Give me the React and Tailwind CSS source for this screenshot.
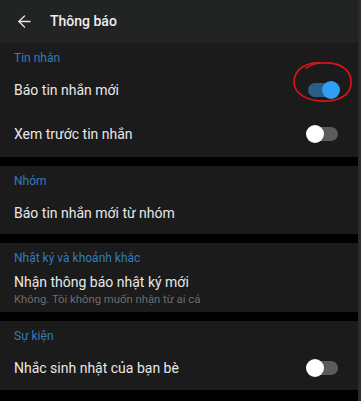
import { ArrowLeft } from "lucide-react";

function Toggle({ on }) {
  return (
    <div className="relative w-[30px] h-[16px] flex items-center">
      <div
        className={`w-[30px] h-[14px] rounded-full ${
          on ? "bg-[#2c5d86]" : "bg-[#5b5b5b]"
        }`}
      />
      <div
        className={`absolute top-[-1px] w-[18px] h-[18px] rounded-full ${
          on ? "right-[-2px] bg-[#2e9ff2]" : "left-[-2px] bg-white"
        }`}
      />
    </div>
  );
}

function Row({ title, toggle, circled }) {
  return (
    <div className="flex items-center justify-between pl-[14px] pr-[20px] h-[44px]">
      <span className="text-[14px] text-[#e8e8e8] leading-[20px]">{title}</span>
      {toggle !== undefined && (
        <div className="relative">
          <Toggle on={toggle} />
          {circled && (
            <svg
              className="absolute left-[-16px] top-[-22px]"
              width="62"
              height="44"
              viewBox="0 0 62 44"
              fill="none"
            >
              <path
                d="M31 3 C14 1 2 10 2 22 C2 34 16 42 35 41 C52 40 60 32 59 20 C58 9 47 2 31 3 C24 3 18 5 14 8"
                stroke="#e0131a"
                strokeWidth="1.6"
                strokeLinecap="round"
              />
            </svg>
          )}
        </div>
      )}
    </div>
  );
}

function Section({ label, children, className = "" }) {
  return (
    <div className={`bg-[#1b1b1b] ${className}`}>
      <div className="pl-[14px] pt-[6px] text-[12px] text-[#2f7dbd] leading-[18px]">
        {label}
      </div>
      {children}
    </div>
  );
}

export default function App() {
  return (
    <div
      className="w-[361px] h-[401px] bg-black flex overflow-hidden"
      style={{ fontFamily: "Roboto, 'Noto Sans', sans-serif" }}
    >
      <div className="flex-1 flex flex-col gap-[9px]">
        <div>
          <div className="h-[43px] bg-[#222423] flex items-center">
            <ArrowLeft className="ml-[15px] text-[#e8e8e8]" size={19} strokeWidth={1.6} />
            <span className="ml-[16px] text-[14px] font-medium text-[#eeeeee]">
              Thông báo
            </span>
          </div>
          <Section label="Tin nhắn" className="h-[114px]">
            <div className="pt-[1px]">
              <Row title="Báo tin nhắn mới" toggle={true} circled />
              <Row title="Xem trước tin nhắn" toggle={false} />
            </div>
          </Section>
        </div>
        <Section label="Nhóm" className="h-[68px]">
          <div className="pt-[1px]">
            <Row title="Báo tin nhắn mới từ nhóm" />
          </div>
        </Section>
        <Section label="Nhật ký và khoảnh khắc" className="h-[69px]">
          <div className="pl-[14px] pt-[5px] flex flex-col">
            <span className="text-[14px] text-[#e8e8e8] leading-[20px]">
              Nhận thông báo nhật ký mới
            </span>
            <span className="text-[11.3px] text-[#6d6d6d] leading-[16px]">
              Không. Tôi không muốn nhận từ ai cả
            </span>
          </div>
        </Section>
        <Section label="Sự kiện" className="h-[69px]">
          <div className="pt-[1px]">
            <Row title="Nhắc sinh nhật của bạn bè" toggle={false} />
          </div>
        </Section>
      </div>
      <div className="w-[3px] bg-[#2a2c2c]" />
    </div>
  );
}
